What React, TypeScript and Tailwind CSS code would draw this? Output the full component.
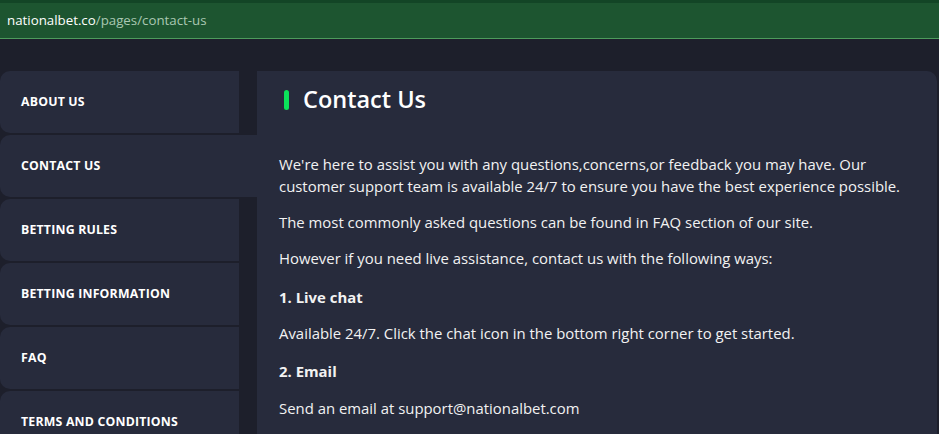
import React from "react";

const items = [
  "ABOUT US",
  "CONTACT US",
  "BETTING RULES",
  "BETTING INFORMATION",
  "FAQ",
  "TERMS AND CONDITIONS",
];

export default function App() {
  const font = { fontFamily: '"Open Sans", "DejaVu Sans", sans-serif' };
  return (
    <div className="w-[939px] h-[434px] overflow-hidden bg-[#1d1f2b]" style={font}>
      <div className="h-[3px] bg-[#134526]" />
      <div className="h-[35px] bg-[#1d5530] flex items-center pl-[7px] text-[13.3px]">
        <span className="text-white font-medium">nationalbet.co</span>
        <span className="text-[#a9c7b2]">/pages/contact-us</span>
      </div>
      <div className="h-px bg-[#4d9b5c]" />
      <div className="flex pt-[32px] pr-[2px]">
        <div className="w-[239px] flex flex-col gap-[2px] shrink-0">
          {items.map((it, i) => (
            <div
              key={it}
              className={
                "h-[62px] flex items-center pl-[21px] rounded-l-[10px] bg-[#272b3c] text-white text-[12.3px] font-bold tracking-[0.2px] " +
                (i === 1 ? "w-[257px] relative z-10" : "w-[239px]")
              }
            >
              {it}
            </div>
          ))}
        </div>
        <div className="ml-[18px] flex-1 bg-[#272b3c] rounded-tr-[10px] h-[400px] pl-[22px] pt-[18px] text-white">
          <div className="flex items-center h-[22px]">
            <div className="w-[5px] h-[20px] rounded-full bg-[#0be35a] ml-[5px]" />
            <div className="ml-[14px] text-[23.5px] font-semibold">Contact Us</div>
          </div>
          <div className="mt-[42px] text-[14.9px] leading-[22px] text-[#f2f2f2]">
            <p>
              We're here to assist you with any questions,concerns,or feedback you may have. Our
              <br />
              customer support team is available 24/7 to ensure you have the best experience possible.
            </p>
            <p className="mt-[14px]">The most commonly asked questions can be found in FAQ section of our site.</p>
            <p className="mt-[14px]">However if you need live assistance, contact us with the following ways:</p>
            <p className="mt-[17px] font-bold">1. Live chat</p>
            <p className="mt-[14px]">Available 24/7. Click the chat icon in the bottom right corner to get started.</p>
            <p className="mt-[16px] font-bold">2. Email</p>
            <p className="mt-[15px]">Send an email at support@nationalbet.com</p>
          </div>
        </div>
      </div>
    </div>
  );
}
